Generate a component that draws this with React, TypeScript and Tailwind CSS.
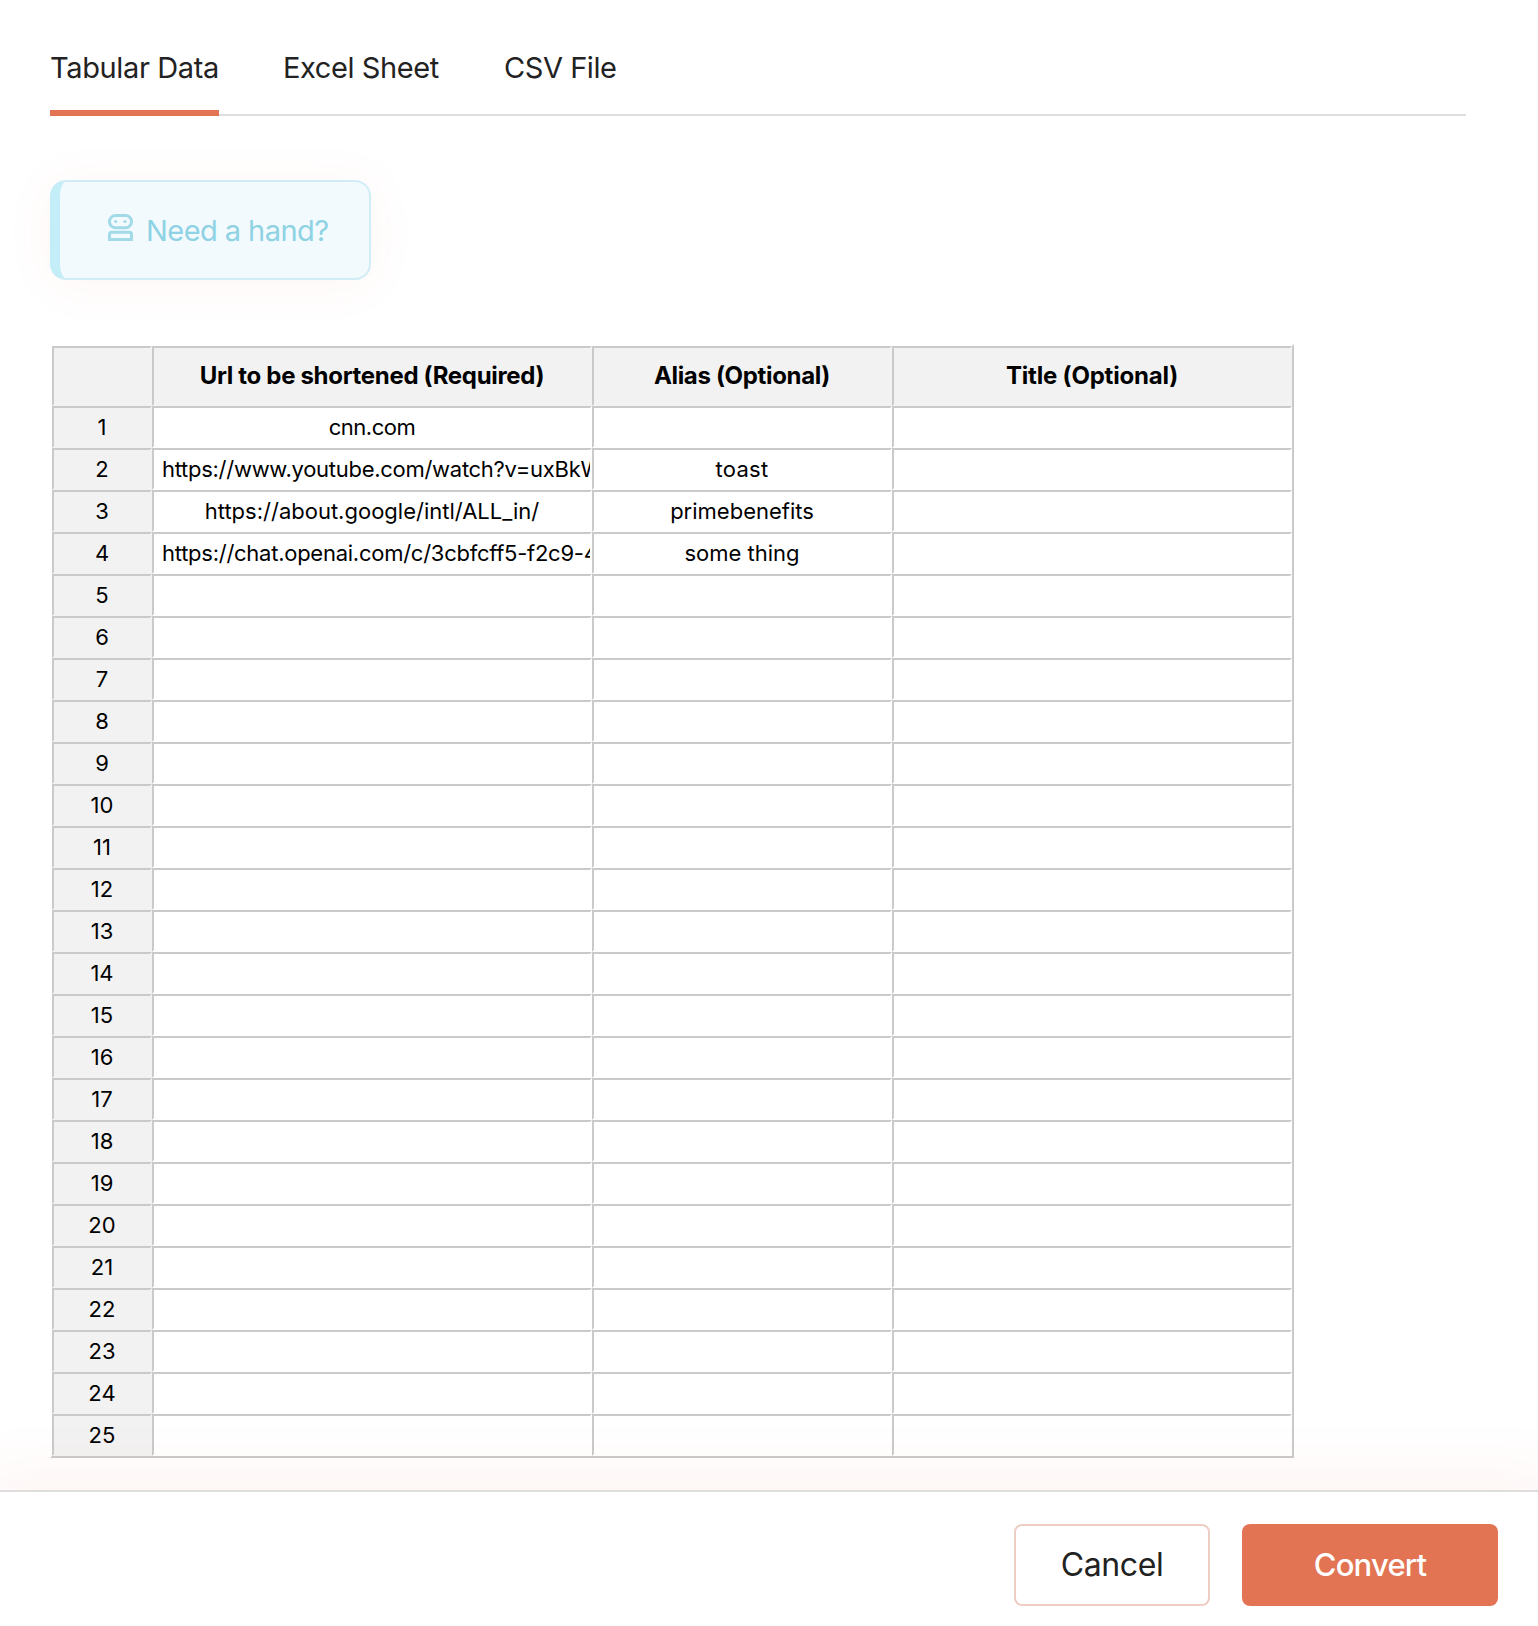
type Cell = { text: string; tracking?: string };

const tabs = [
  { label: 'Tabular Data', style: 'w-[169px] tracking-[-0.36px] border-[#e27453]' },
  { label: 'Excel Sheet', style: 'w-[156px] tracking-[-0.4px] border-transparent' },
  { label: 'CSV File', style: 'w-[113px] pl-px tracking-[-0.45px] border-transparent' },
];

const headers = [
  { label: 'Url to be shortened (Required)', tracking: 'tracking-[-0.32px]' },
  { label: 'Alias (Optional)', tracking: 'tracking-[-0.34px]' },
  { label: 'Title (Optional)', tracking: 'tracking-[-0.2px]' },
];

const data: Cell[][] = [
  [{ text: 'cnn.com', tracking: 'tracking-[-0.48px]' }],
  [
    { text: 'https://www.youtube.com/watch?v=uxBkWm', tracking: 'tracking-[-0.28px]' },
    { text: 'toast', tracking: 'tracking-[0.3px]' },
  ],
  [{ text: 'https://about.google/intl/ALL_in/' }, { text: 'primebenefits' }],
  [
    { text: 'https://chat.openai.com/c/3cbfcff5-f2c9-4c', tracking: 'tracking-[-0.26px]' },
    { text: 'some thing' },
  ],
];

const cellBorder = 'border-2 border-t-[#cacaca] border-l-[#cacaca] border-r-transparent border-b-transparent';

function RobotIcon() {
  return (
    <svg width="25" height="27" viewBox="0 0 25 27" fill="none" stroke="#a3dae8" strokeWidth="3">
      <rect x="1.5" y="1.5" width="22" height="12.2" rx="6" />
      <path d="M1.5 25.5V20.3a2 2 0 0 1 2-2h18a2 2 0 0 1 2 2V25.5Z" />
      <circle cx="7.7" cy="7.5" r="1.6" fill="#a3dae8" stroke="none" />
      <circle cx="17" cy="7.5" r="1.6" fill="#a3dae8" stroke="none" />
    </svg>
  );
}

function Sheet() {
  return (
    <table className="mt-16 w-[1244px] table-fixed border-separate border-spacing-0 border-2 border-t-transparent border-l-transparent border-r-[#cacaca] border-b-[#cacaca] text-center text-black">
      <colgroup>
        <col className="w-[100px]" />
        <col className="w-[440px]" />
        <col className="w-[300px]" />
        <col className="w-[400px]" />
      </colgroup>
      <thead>
        <tr className="h-[60px] bg-[#f2f2f2] text-[24px] leading-7">
          <th className={cellBorder} />
          {headers.map((h) => (
            <th key={h.label} className={`${cellBorder} ${h.tracking} px-1 py-0 font-bold`}>
              {h.label}
            </th>
          ))}
        </tr>
      </thead>
      <tbody>
        {Array.from({ length: 25 }, (_, r) => (
          <tr key={r} className="h-[42px] text-[22px] leading-[26px]">
            <td className={`${cellBorder} bg-[#f2f2f2] p-0`}>{r + 1}</td>
            {[0, 1, 2].map((c) => (
              <td
                key={c}
                className={`${cellBorder} ${data[r]?.[c]?.tracking ?? ''} overflow-hidden whitespace-nowrap px-2 py-0`}
              >
                {data[r]?.[c]?.text}
              </td>
            ))}
          </tr>
        ))}
      </tbody>
    </table>
  );
}

export default function App() {
  return (
    <div className="flex h-[1626px] flex-col overflow-hidden bg-white font-['Inter',sans-serif]">
      <main className="h-[1490px] shrink-0 pl-[50px] pr-[72px] pt-[50px]">
        <nav className="flex gap-16 border-b-2 border-[#dedede]">
          {tabs.map((t) => (
            <button
              key={t.label}
              className={`${t.style} -mb-[2px] whitespace-nowrap border-b-[6px] pb-6 text-left text-[29px] leading-9 text-[#222222]`}
            >
              {t.label}
            </button>
          ))}
        </nav>
        <button className="mt-16 flex h-[100px] w-[321px] items-center gap-[13px] whitespace-nowrap rounded-2xl border-2 border-l-[10px] border-[#d0edf5] border-l-[#c3eef8] bg-[#f2fafd] pl-[48px] text-[29px] leading-9 tracking-[-0.56px] text-[#8ed2e4] shadow-[0_4px_50px_rgba(240,90,60,0.06)]">
          <span className="mb-[5px]">
            <RobotIcon />
          </span>
          <span className="pt-[2px]">Need a hand?</span>
        </button>
        <Sheet />
      </main>
      <footer className="relative flex h-[136px] shrink-0 justify-end gap-8 border-t-2 border-[#dedede] bg-white pr-10 pt-8 text-[32px] leading-10 shadow-[0_0_60px_20px_rgba(240,90,60,0.06)]">
        <button className="h-[82px] w-[196px] rounded-lg border-2 border-[#edcdc4] tracking-[-0.4px] text-[#222222]">
          Cancel
        </button>
        <button className="h-[82px] w-[256px] rounded-lg bg-[#e27453] text-[31px] font-medium tracking-[-0.8px] text-white">
          Convert
        </button>
      </footer>
    </div>
  );
}
